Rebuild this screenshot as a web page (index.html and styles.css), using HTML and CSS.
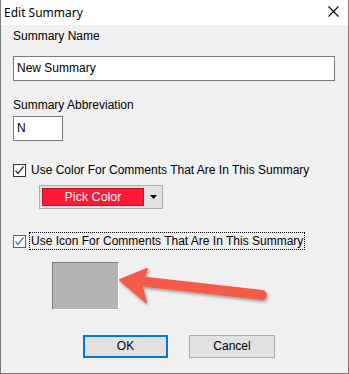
FILE: index.html
```html
<!DOCTYPE html>
<html>
<head>
<meta charset="utf-8">
<link rel="stylesheet" href="styles.css">
</head>
<body>
<div class="window">
  <div class="titlebar">
    <span class="title">Edit Summary</span>
    <svg class="close" width="11" height="11" viewBox="0 0 11 11"><path d="M0.5 0.5 L10.5 10.5 M10.5 0.5 L0.5 10.5" stroke="#000" stroke-width="1.1" fill="none"/></svg>
  </div>
  <div class="content">
    <div class="label l1">Summary Name</div>
    <div class="input name">New Summary</div>
    <div class="label l2">Summary Abbreviation</div>
    <div class="input abbr">N</div>
    <div class="check c1">
      <span class="box"><svg width="11" height="11" viewBox="0 0 11 11"><path d="M1.5 5.5 L4 8.5 L9.5 1.5" stroke="#333" stroke-width="1.3" fill="none"/></svg></span>
      <span class="ctext">Use Color For Comments That Are In This Summary</span>
    </div>
    <div class="combo">
      <div class="swatch">Pick Color</div>
      <div class="drop"><svg width="7" height="4" viewBox="0 0 7 4"><path d="M0 0 L7 0 L3.5 4 Z" fill="#000"/></svg></div>
    </div>
    <div class="check c2">
      <span class="box blue"><svg width="11" height="11" viewBox="0 0 11 11"><path d="M1.5 5.5 L4 8.5 L9.5 1.5" stroke="#2e7fd0" stroke-width="1.3" fill="none"/></svg></span>
      <span class="ctext focus">Use Icon For Comments That Are In This Summary</span>
    </div>
    <div class="iconbox"></div>
    <div class="buttons">
      <div class="btn ok">OK</div>
      <div class="btn cancel">Cancel</div>
    </div>
  </div>
  <svg class="arrow" width="170" height="60" viewBox="0 0 170 60">
    <defs>
      <filter id="sh" x="-10%" y="-30%" width="130%" height="180%">
        <feDropShadow dx="1" dy="2" stdDeviation="1.5" flood-color="#000" flood-opacity="0.35"/>
      </filter>
    </defs>
    <g filter="url(#sh)">
      <path d="M30 16 L145 29" stroke="#f65a4a" stroke-width="10" stroke-linecap="round" fill="none"/>
      <path d="M3 14 L30 3 L26 15 L25 21 L29 36 Z" fill="#f65a4a" stroke="#f65a4a" stroke-width="2" stroke-linejoin="round"/>
    </g>
  </svg>
</div>
</body>
</html>
```
FILE: styles.css
```css
html, body {
  margin: 0;
  padding: 0;
}
body {
  font-family: "Liberation Sans", Arial, sans-serif;
  font-size: 12px;
  color: #000;
}
.window {
  position: relative;
  width: 349px;
  height: 374px;
  box-sizing: border-box;
  border: 1px solid #7a7a7a;
  border-top: none;
  background: #f0f0f0;
  display: flex;
  flex-direction: column;
}
.titlebar {
  height: 25px;
  background: #fff;
  display: flex;
  align-items: center;
  justify-content: space-between;
  padding-left: 3px;
  padding-right: 9px;
}
.title {
  font-family: "Noto Sans", sans-serif;
  font-size: 12px;
  margin-top: -1px;
}
.close {
  margin-top: -3px;
}
.content {
  display: flex;
  flex-direction: column;
  padding-left: 12px;
}
.label {
  line-height: 14px;
}
.l1 { margin-top: 4px; }
.input {
  box-sizing: border-box;
  height: 25px;
  background: #fff;
  border: 1px solid #7a7a7a;
  padding: 0 3px;
  line-height: 23px;
}
.name { margin-top: 13px; width: 322px; }
.l2 { margin-top: 17px; }
.abbr { margin-top: 4px; width: 50px; }
.check {
  display: flex;
  align-items: center;
  line-height: 14px;
}
.c1 { margin-top: 21px; }
.c2 { margin-top: 24px; }
.box {
  box-sizing: border-box;
  width: 13px;
  height: 13px;
  border: 1px solid #333;
  background: #fff;
  display: flex;
  align-items: center;
  justify-content: center;
  margin-right: 4px;
}
.box.blue {
  border-color: #0078d7;
}
.ctext {
  padding: 1px 1px;
}
.focus {
  outline: 1px dotted #000;
  outline-offset: 0;
}
.combo {
  box-sizing: border-box;
  margin-top: 7px;
  margin-left: 26px;
  width: 124px;
  height: 24px;
  border: 1px solid #adadad;
  background: #e1e1e1;
  display: flex;
  align-items: center;
  padding-left: 2px;
}
.swatch {
  box-sizing: border-box;
  width: 102px;
  height: 18px;
  background: #fe1935;
  border: 1px solid #c8102a;
  color: #fff;
  text-align: center;
  line-height: 16px;
  font-size: 12.5px;
}
.drop {
  flex: 1;
  display: flex;
  justify-content: center;
  align-items: center;
}
.iconbox {
  box-sizing: border-box;
  margin-top: 13px;
  margin-left: 39px;
  width: 67px;
  height: 48px;
  background: #b4b4b4;
  border-top: 1px solid #7a7a7a;
  border-left: 1px solid #7a7a7a;
  border-right: 1px solid #fff;
  border-bottom: 1px solid #fff;
}
.buttons {
  display: flex;
  margin-top: 25px;
  margin-left: 70px;
  gap: 21px;
}
.btn {
  box-sizing: border-box;
  height: 23px;
  background: #e1e1e1;
  border: 1px solid #adadad;
  text-align: center;
  line-height: 21px;
}
.ok {
  width: 85px;
  border: 2px solid #0078d7;
  line-height: 19px;
}
.cancel {
  width: 86px;
}
.arrow {
  position: absolute;
  left: 116px;
  top: 266px;
}
```
